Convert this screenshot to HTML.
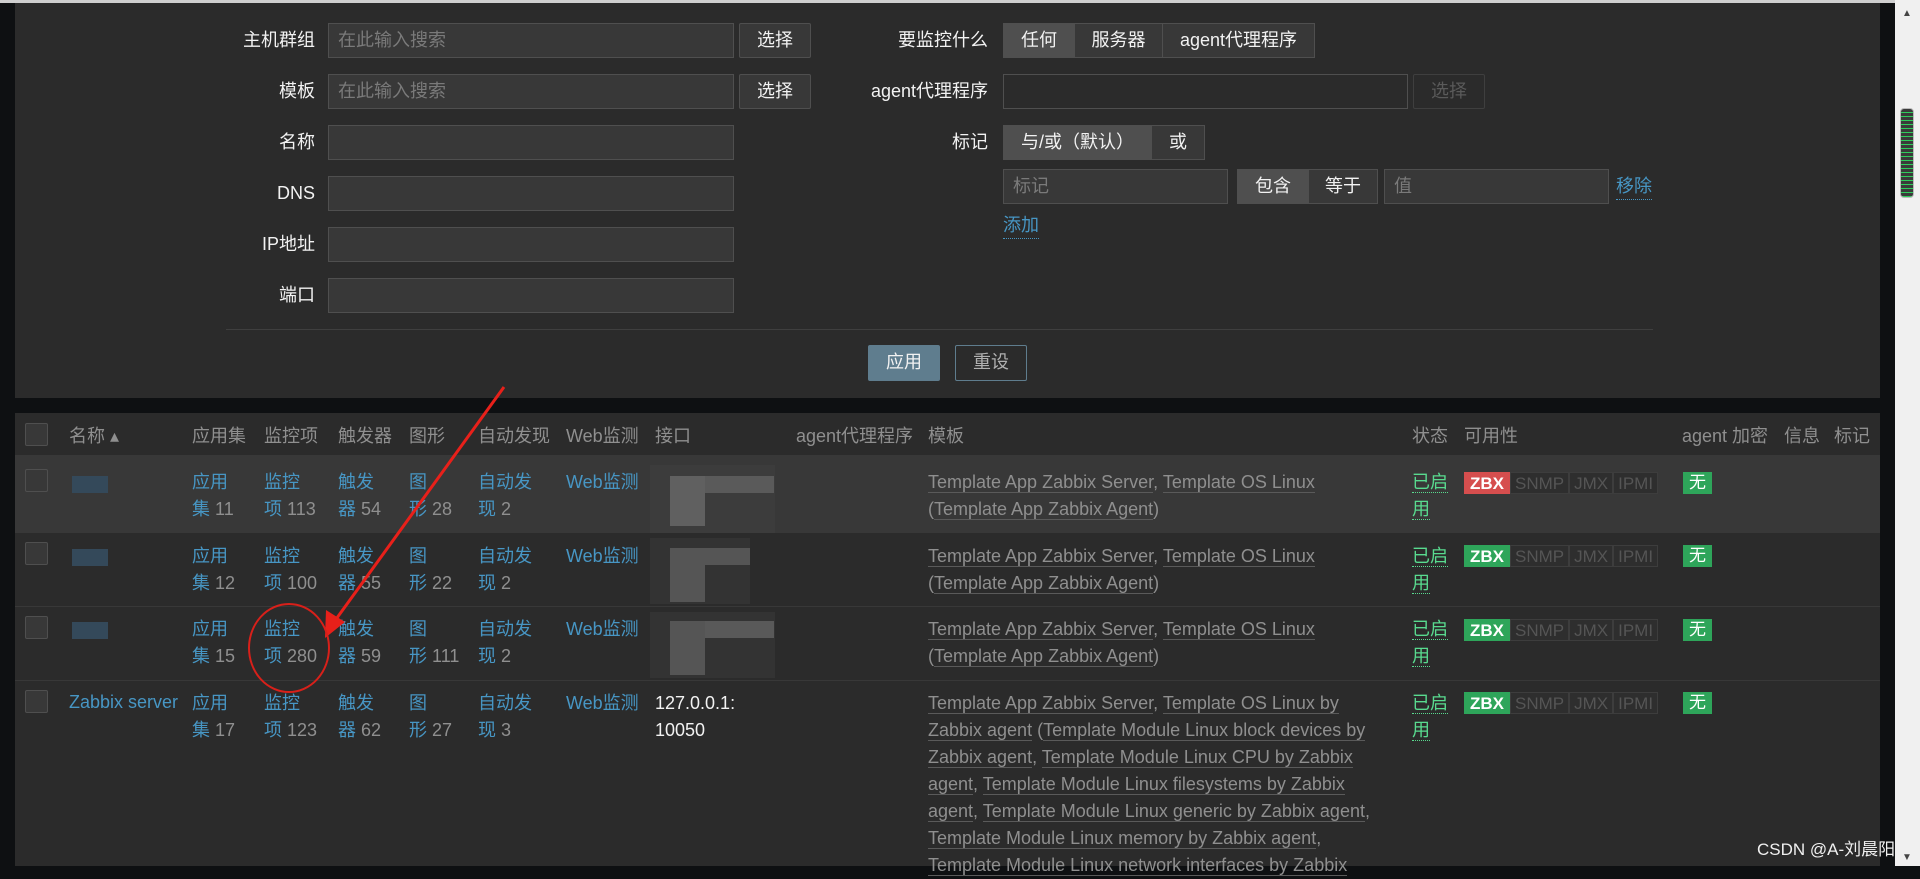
<!DOCTYPE html>
<html><head><meta charset="utf-8"><style>
*{margin:0;padding:0;box-sizing:border-box}
body{width:1920px;height:866px;overflow:hidden;background:#0e1012;font-family:"Liberation Sans","Noto Sans CJK SC",sans-serif;font-size:18px;position:relative;color:#f2f2f2}
.a{position:absolute;white-space:nowrap}
.lbl{position:absolute;text-align:right;color:#f2f2f2;line-height:35px}
.in{position:absolute;height:35px;background:#383838;border:1px solid #4f4f4f;color:#7a7a7a;line-height:33px;padding-left:9px}
.btn{position:absolute;height:35px;background:#383838;border:1px solid #4f4f4f;border-radius:2px;color:#f2f2f2;line-height:33px;text-align:center}
.seg{position:absolute;height:35px;line-height:33px;text-align:center;background:#383838;border:1px solid #4f4f4f;color:#f2f2f2}
.sel{background:#4f4f4f}
.lnk{color:#4796c4}
.th{position:absolute;top:423px;color:#8f8f8f;line-height:27px;white-space:nowrap}
.c{position:absolute;line-height:27px;white-space:nowrap;color:#4796c4}
.cb{position:absolute;width:23px;height:23px;border:1px solid #4f4f4f;background:#383838;border-radius:2px}
.tp{position:absolute;left:928px;line-height:27px;color:#8f8f8f;white-space:nowrap}
.tp u{text-decoration:none;border-bottom:1px solid #5a5a5a}
.st{position:absolute;left:1412px;line-height:27px;color:#59db8f}
.st span{border-bottom:1px dotted #59db8f}
.av{position:absolute;left:1464px;height:22px;display:flex;font-size:17px;line-height:22px}
.av div{padding:0 4px;color:#555;border:1px solid #3d3d3d;background:#2e2e2e}
.av .z{background:#2ea55a;color:#fff;border-color:#2ea55a;font-weight:bold;padding:0 5px}
.no{position:absolute;left:1683px;width:29px;height:22px;background:#2ea55a;color:#fff;text-align:center;line-height:22px;font-size:17px}
.blk{position:absolute}
</style></head><body>
<div class="a" style="left:0;top:0;width:1920px;height:3px;background:#cfcfcf"></div>
<div class="a" style="left:15px;top:3px;width:1865px;height:395px;background:#2b2b2b"></div>
<div class="lbl" style="left:200px;width:115px;top:23px">主机群组</div>
<div class="lbl" style="left:200px;width:115px;top:74px">模板</div>
<div class="lbl" style="left:200px;width:115px;top:125px">名称</div>
<div class="lbl" style="left:200px;width:115px;top:176px">DNS</div>
<div class="lbl" style="left:200px;width:115px;top:227px">IP地址</div>
<div class="lbl" style="left:200px;width:115px;top:278px">端口</div>
<div class="in" style="left:328px;top:23px;width:406px">在此输入搜索</div>
<div class="in" style="left:328px;top:74px;width:406px">在此输入搜索</div>
<div class="in" style="left:328px;top:125px;width:406px"></div>
<div class="in" style="left:328px;top:176px;width:406px"></div>
<div class="in" style="left:328px;top:227px;width:406px"></div>
<div class="in" style="left:328px;top:278px;width:406px"></div>
<div class="btn" style="left:739px;top:23px;width:72px">选择</div>
<div class="btn" style="left:739px;top:74px;width:72px">选择</div>

<div class="lbl" style="left:850px;width:138px;top:23px">要监控什么</div>
<div class="lbl" style="left:850px;width:138px;top:74px">agent代理程序</div>
<div class="lbl" style="left:850px;width:138px;top:125px">标记</div>
<div class="seg sel" style="left:1003px;top:23px;width:72px">任何</div>
<div class="seg" style="left:1074px;top:23px;width:89px">服务器</div>
<div class="seg" style="left:1162px;top:23px;width:153px">agent代理程序</div>
<div class="in" style="left:1003px;top:74px;width:405px;background:#2b2b2b"></div>
<div class="btn" style="left:1413px;top:74px;width:72px;background:#2b2b2b;border-color:#3f3f3f;color:#5a5a5a">选择</div>
<div class="seg sel" style="left:1003px;top:125px;width:149px">与/或（默认）</div>
<div class="seg" style="left:1151px;top:125px;width:54px">或</div>
<div class="in" style="left:1003px;top:169px;width:225px">标记</div>
<div class="seg sel" style="left:1237px;top:169px;width:72px">包含</div>
<div class="seg" style="left:1308px;top:169px;width:70px">等于</div>
<div class="in" style="left:1384px;top:169px;width:225px">值</div>
<div class="a lnk" style="left:1616px;top:174px;line-height:25px;border-bottom:1px dotted #4796c4">移除</div>
<div class="a lnk" style="left:1003px;top:213px;line-height:25px;border-bottom:1px dotted #4796c4">添加</div>
<div class="a" style="left:226px;top:329px;width:1427px;height:1px;background:#3f3f3f"></div>
<div class="btn" style="left:868px;top:345px;width:72px;height:36px;background:#5f7d8e;border-color:#5f7d8e">应用</div>
<div class="btn" style="left:955px;top:345px;width:72px;height:36px;background:#2b2b2b;border-color:#5f7d8e;color:#b0b0b0">重设</div>

<div class="a" style="left:15px;top:413px;width:1865px;height:453px;background:#2b2b2b"></div>
<div class="a" style="left:15px;top:455px;width:1865px;height:4px;background:#383838"></div>
<div class="cb" style="left:25px;top:423px"></div>
<div class="th lnk" style="left:69px">名称 ▴</div>
<div class="th" style="left:192px">应用集</div>
<div class="th" style="left:264px">监控项</div>
<div class="th" style="left:338px">触发器</div>
<div class="th" style="left:409px">图形</div>
<div class="th" style="left:478px">自动发现</div>
<div class="th" style="left:566px">Web监测</div>
<div class="th" style="left:655px">接口</div>
<div class="th" style="left:796px">agent代理程序</div>
<div class="th" style="left:928px">模板</div>
<div class="th lnk" style="left:1412px">状态</div>
<div class="th" style="left:1464px">可用性</div>
<div class="th" style="left:1682px">agent 加密</div>
<div class="th" style="left:1784px">信息</div>
<div class="th" style="left:1834px">标记</div>

<div class="a" style="left:15px;top:459px;width:1865px;height:74px;background:#383838"></div>
<div class="a" style="left:15px;top:606px;width:1865px;height:1px;background:#383838"></div>
<div class="a" style="left:15px;top:680px;width:1865px;height:1px;background:#383838"></div>

<div class="cb" style="left:25px;top:469px"></div>
<div class="cb" style="left:25px;top:542px"></div>
<div class="cb" style="left:25px;top:616px"></div>
<div class="cb" style="left:25px;top:690px"></div>
<div class="blk" style="left:72px;top:476px;width:36px;height:17px;background:#34495a"></div>
<div class="blk" style="left:72px;top:549px;width:36px;height:17px;background:#34495a"></div>
<div class="blk" style="left:72px;top:622px;width:36px;height:17px;background:#34495a"></div>
<div class="c" style="left:69px;top:689px">Zabbix server</div>

<div class="c" style="left:192px;top:469px">应用<br>集 <span style="color:#8f8f8f">11</span></div>
<div class="c" style="left:264px;top:469px">监控<br>项 <span style="color:#8f8f8f">113</span></div>
<div class="c" style="left:338px;top:469px">触发<br>器 <span style="color:#8f8f8f">54</span></div>
<div class="c" style="left:409px;top:469px">图<br>形 <span style="color:#8f8f8f">28</span></div>
<div class="c" style="left:478px;top:469px">自动发<br>现 <span style="color:#8f8f8f">2</span></div>
<div class="c" style="left:566px;top:469px">Web监测</div>

<div class="c" style="left:192px;top:543px">应用<br>集 <span style="color:#8f8f8f">12</span></div>
<div class="c" style="left:264px;top:543px">监控<br>项 <span style="color:#8f8f8f">100</span></div>
<div class="c" style="left:338px;top:543px">触发<br>器 <span style="color:#8f8f8f">55</span></div>
<div class="c" style="left:409px;top:543px">图<br>形 <span style="color:#8f8f8f">22</span></div>
<div class="c" style="left:478px;top:543px">自动发<br>现 <span style="color:#8f8f8f">2</span></div>
<div class="c" style="left:566px;top:543px">Web监测</div>

<div class="c" style="left:192px;top:616px">应用<br>集 <span style="color:#8f8f8f">15</span></div>
<div class="c" style="left:264px;top:616px">监控<br>项 <span style="color:#8f8f8f">280</span></div>
<div class="c" style="left:338px;top:616px">触发<br>器 <span style="color:#8f8f8f">59</span></div>
<div class="c" style="left:409px;top:616px">图<br>形 <span style="color:#8f8f8f">111</span></div>
<div class="c" style="left:478px;top:616px">自动发<br>现 <span style="color:#8f8f8f">2</span></div>
<div class="c" style="left:566px;top:616px">Web监测</div>

<div class="c" style="left:192px;top:690px">应用<br>集 <span style="color:#8f8f8f">17</span></div>
<div class="c" style="left:264px;top:690px">监控<br>项 <span style="color:#8f8f8f">123</span></div>
<div class="c" style="left:338px;top:690px">触发<br>器 <span style="color:#8f8f8f">62</span></div>
<div class="c" style="left:409px;top:690px">图<br>形 <span style="color:#8f8f8f">27</span></div>
<div class="c" style="left:478px;top:690px">自动发<br>现 <span style="color:#8f8f8f">3</span></div>
<div class="c" style="left:566px;top:690px">Web监测</div>
<div class="c" style="left:655px;top:690px;color:#f2f2f2">127.0.0.1:<br>10050</div>

<div class="blk" style="left:650px;top:465px;width:125px;height:68px;background:#3c3c3c"></div>
<div class="blk" style="left:670px;top:476px;width:104px;height:17px;background:#5a5a5a"></div>
<div class="blk" style="left:670px;top:476px;width:35px;height:50px;background:#606060"></div>
<div class="blk" style="left:650px;top:538px;width:100px;height:66px;background:#333"></div>
<div class="blk" style="left:670px;top:548px;width:80px;height:17px;background:#555"></div>
<div class="blk" style="left:670px;top:548px;width:35px;height:54px;background:#555"></div>
<div class="blk" style="left:650px;top:612px;width:125px;height:66px;background:#333"></div>
<div class="blk" style="left:670px;top:621px;width:104px;height:17px;background:#595959"></div>
<div class="blk" style="left:670px;top:621px;width:35px;height:54px;background:#555"></div>

<div class="tp" style="top:469px"><u>Template App Zabbix Server</u>, <u>Template OS Linux</u><br>(<u>Template App Zabbix Agent</u>)</div>
<div class="tp" style="top:543px"><u>Template App Zabbix Server</u>, <u>Template OS Linux</u><br>(<u>Template App Zabbix Agent</u>)</div>
<div class="tp" style="top:616px"><u>Template App Zabbix Server</u>, <u>Template OS Linux</u><br>(<u>Template App Zabbix Agent</u>)</div>
<div class="tp" style="top:690px"><u>Template App Zabbix Server</u>, <u>Template OS Linux by</u><br><u>Zabbix agent</u> (<u>Template Module Linux block devices by</u><br><u>Zabbix agent</u>, <u>Template Module Linux CPU by Zabbix</u><br><u>agent</u>, <u>Template Module Linux filesystems by Zabbix</u><br><u>agent</u>, <u>Template Module Linux generic by Zabbix agent</u>,<br><u>Template Module Linux memory by Zabbix agent</u>,<br><u>Template Module Linux network interfaces by Zabbix</u></div>

<div class="st" style="top:469px"><span>已启</span><br><span>用</span></div>
<div class="st" style="top:543px"><span>已启</span><br><span>用</span></div>
<div class="st" style="top:616px"><span>已启</span><br><span>用</span></div>
<div class="st" style="top:690px"><span>已启</span><br><span>用</span></div>

<div class="av" style="top:472px"><div class="z" style="background:#d64e4e;border-color:#d64e4e">ZBX</div><div>SNMP</div><div>JMX</div><div>IPMI</div></div>
<div class="av" style="top:545px"><div class="z">ZBX</div><div>SNMP</div><div>JMX</div><div>IPMI</div></div>
<div class="av" style="top:619px"><div class="z">ZBX</div><div>SNMP</div><div>JMX</div><div>IPMI</div></div>
<div class="av" style="top:692px"><div class="z">ZBX</div><div>SNMP</div><div>JMX</div><div>IPMI</div></div>
<div class="no" style="top:472px">无</div>
<div class="no" style="top:545px">无</div>
<div class="no" style="top:619px">无</div>
<div class="no" style="top:692px">无</div>

<div class="a" style="left:1895px;top:0;width:25px;height:866px;background:#f0f0f0"></div>
<div class="a" style="left:1902px;top:8px;font-size:10px;color:#444">▲</div>
<div class="a" style="left:1902px;top:852px;font-size:10px;color:#444">▼</div>
<div class="a" style="left:1900px;top:108px;width:14px;height:90px;border-radius:4px;border:1px solid #bbb;background-image:repeating-linear-gradient(#3a3a3a 0 3px,#2ecc5a 3px 4px)"></div>

<svg class="a" style="left:0;top:0" width="1920" height="866">
<line x1="504" y1="387" x2="334" y2="622" stroke="#e8201a" stroke-width="3"/>
<polygon points="325,638 326,610 345,622" fill="#e8201a"/>
<ellipse cx="289" cy="648" rx="40" ry="44" fill="none" stroke="#d8201a" stroke-width="2"/>
</svg>
<div class="a" style="left:1757px;top:835px;font-size:17px;color:#f0f0f0">CSDN @A-刘晨阳</div>
</body></html>
